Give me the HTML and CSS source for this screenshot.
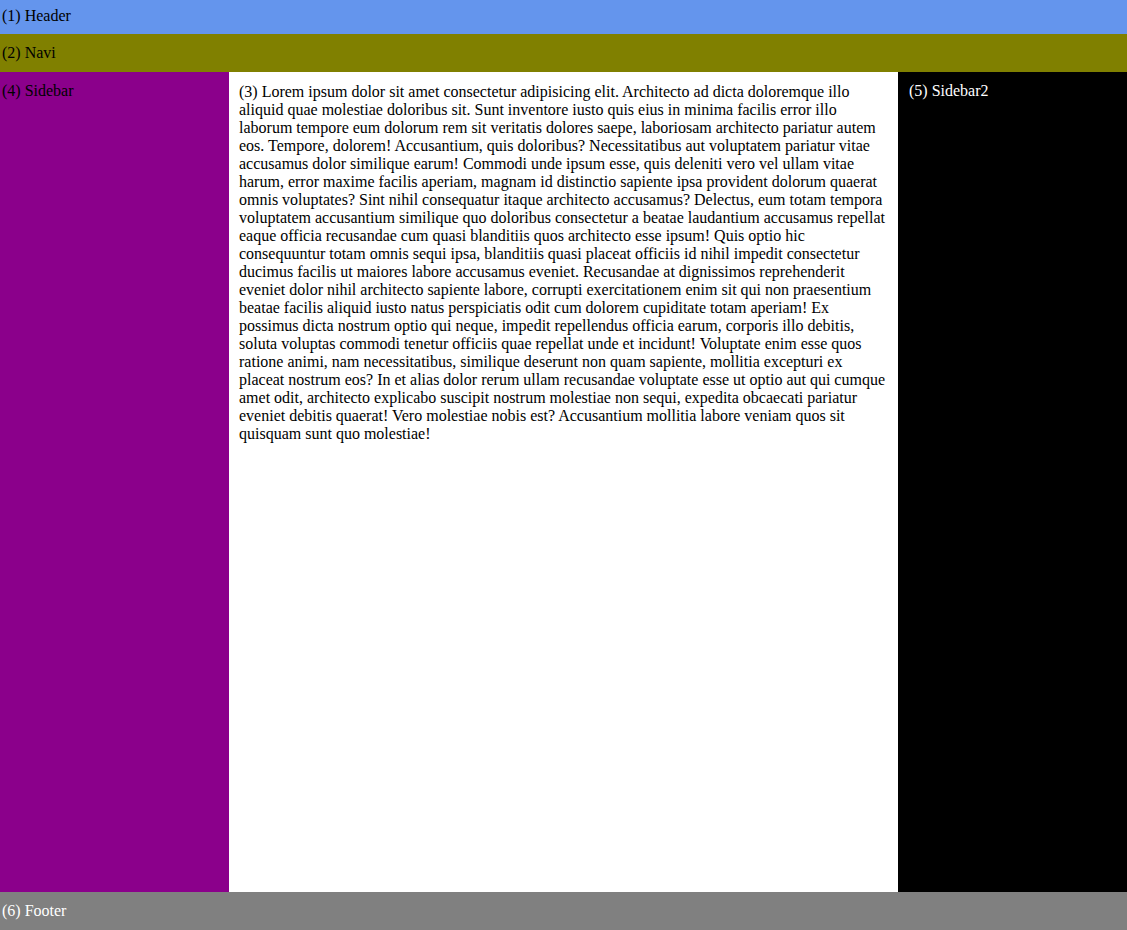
FILE: index.html
```html
<!DOCTYPE html>
<html>
<head>
<meta charset="utf-8">
<link rel="stylesheet" href="styles.css">
</head>
<body>
<div class="page">
  <header class="header">(1) Header</header>
  <nav class="navi">(2) Navi</nav>
  <aside class="sidebar">(4) Sidebar</aside>
  <main class="content">(3) Lorem ipsum dolor sit amet consectetur adipisicing elit. Architecto ad dicta doloremque illo aliquid quae molestiae doloribus sit. Sunt inventore iusto quis eius in minima facilis error illo laborum tempore eum dolorum rem sit veritatis dolores saepe, laboriosam architecto pariatur autem eos. Tempore, dolorem! Accusantium, quis doloribus? Necessitatibus aut voluptatem pariatur vitae accusamus dolor similique earum! Commodi unde ipsum esse, quis deleniti vero vel ullam vitae harum, error maxime facilis aperiam, magnam id distinctio sapiente ipsa provident dolorum quaerat omnis voluptates? Sint nihil consequatur itaque architecto accusamus? Delectus, eum totam tempora voluptatem accusantium similique quo doloribus consectetur a beatae laudantium accusamus repellat eaque officia recusandae cum quasi blanditiis quos architecto esse ipsum! Quis optio hic consequuntur totam omnis sequi ipsa, blanditiis quasi placeat officiis id nihil impedit consectetur ducimus facilis ut maiores labore accusamus eveniet. Recusandae at dignissimos reprehenderit eveniet dolor nihil architecto sapiente labore, corrupti exercitationem enim sit qui non praesentium beatae facilis aliquid iusto natus perspiciatis odit cum dolorem cupiditate totam aperiam! Ex possimus dicta nostrum optio qui neque, impedit repellendus officia earum, corporis illo debitis, soluta voluptas commodi tenetur officiis quae repellat unde et incidunt! Voluptate enim esse quos ratione animi, nam necessitatibus, similique deserunt non quam sapiente, mollitia excepturi ex placeat nostrum eos? In et alias dolor rerum ullam recusandae voluptate esse ut optio aut qui cumque amet odit, architecto explicabo suscipit nostrum molestiae non sequi, expedita obcaecati pariatur eveniet debitis quaerat! Vero molestiae nobis est? Accusantium mollitia labore veniam quos sit quisquam sunt quo molestiae!</main>
  <aside class="sidebar2">(5) Sidebar2</aside>
  <footer class="footer">(6) Footer</footer>
</div>
</body>
</html>
```

FILE: styles.css
```css
html, body {
  margin: 0;
  padding: 0;
}
body {
  font-family: "Liberation Serif", "Times New Roman", serif;
  font-size: 16px;
  line-height: 18px;
}
.page {
  display: grid;
  grid-template-columns: 229px 1fr 229px;
  grid-template-rows: 34px 38px 1fr 38px;
  height: 930px;
}
.header {
  grid-column: 1 / 4;
  background: #6495ed;
  color: #000;
  padding: 7px 2px;
}
.navi {
  grid-column: 1 / 4;
  background: #808000;
  color: #000;
  padding: 10px 2px;
}
.sidebar {
  background: #8b008b;
  color: #000;
  padding: 10px 2px;
}
.content {
  background: #fff;
  color: #000;
  padding: 11px 10px;
}
.sidebar2 {
  background: #000;
  color: #fff;
  padding: 10px 10px 10px 11px;
}
.footer {
  grid-column: 1 / 4;
  background: #808080;
  color: #fff;
  padding: 10px 2px;
}
```
